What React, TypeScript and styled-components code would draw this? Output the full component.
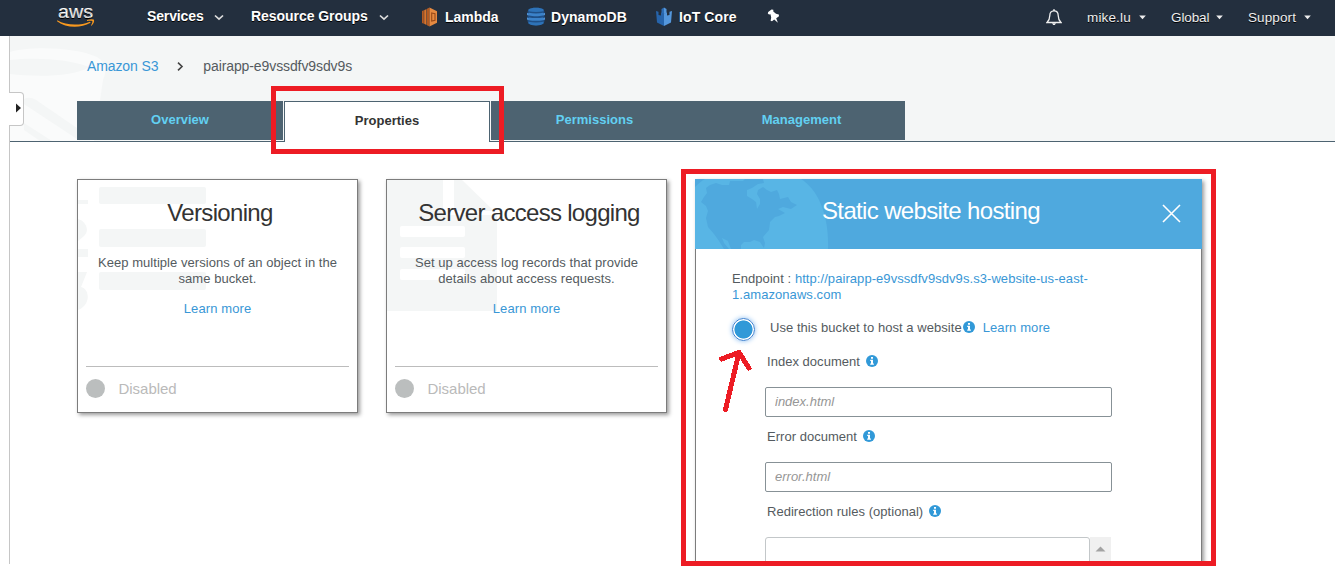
import React from "react";
import styled, { createGlobalStyle } from "styled-components";

const Global = createGlobalStyle`
  * { box-sizing: border-box; }
  html, body { margin: 0; background: #fff; overflow: hidden; }
  body { font-family: "Liberation Sans", Arial, sans-serif; font-size: 13px; color: #545b60; }
  a { color: #3997d6; text-decoration: none; }
`;

const Page = styled.div`
  width: 1335px;
  height: 567px;
  position: relative;
  overflow: hidden;
  display: flex;
  flex-direction: column;
`;

const NavBar = styled.header`
  height: 36px;
  flex: none;
  background: #232f3e;
  display: flex;
  align-items: center;
  padding: 0 24px 3px 57px;
  color: #fff;
  text-shadow: 0 1px 0 #000;
`;

const NavItem = styled.div<{ $ml: number; $ls?: number; $light?: boolean; $raised?: boolean }>`
  display: flex;
  align-items: center;
  height: 34px;
  padding-top: ${(p) => (p.$light ? 2 : 0)}px;
  padding-bottom: ${(p) => (p.$raised ? 1 : 0)}px;
  margin-left: ${(p) => p.$ml}px;
  font-weight: ${(p) => (p.$light ? 400 : 700)};
  font-size: ${(p) => (p.$light ? 13.5 : 14)}px;
  letter-spacing: ${(p) => p.$ls ?? 0}px;
  white-space: nowrap;
  color: ${(p) => (p.$light ? "#eee" : "#fff")};
  svg { display: block; flex: none; }
`;

const NavLabel = styled.span<{ $w: number }>`
  width: ${(p) => p.$w}px;
`;

const Spacer = styled.div`
  flex: 1;
`;

const Body = styled.div`
  width: 1326px;
  height: 528px;
  margin-left: 9px;
  border-left: 1px solid #c6c6c6;
  display: flex;
  flex-direction: column;
`;

const Hero = styled.div`
  height: 106px;
  flex: none;
  position: relative;
  background: #f4f6f6;
  border-bottom: 1px solid #4d6371;
  display: flex;
  flex-direction: column;
  padding-left: 67px;
`;

const BucketArt = styled.svg`
  position: absolute;
  left: 0;
  top: 0;
`;

const Crumbs = styled.nav`
  position: relative;
  height: 65px;
  flex: none;
  padding: 2px 0 7px 10px;
  display: flex;
  align-items: center;
  font-size: 14px;
  svg { margin: 0 19px 0 18px; }
`;

const CrumbLink = styled.a`
  letter-spacing: -0.12px;
`;
const CrumbText = styled.span`
  letter-spacing: -0.1px;
`;

const Tabs = styled.div`
  position: relative;
  display: flex;
  align-items: flex-start;
  height: 40px;
`;

const Tab = styled.div<{ $active?: boolean; $w: number }>`
  width: ${(p) => p.$w}px;
  height: ${(p) => (p.$active ? 41 : 39)}px;
  background: ${(p) => (p.$active ? "#fff" : "#4d6371")};
  border: ${(p) => (p.$active ? "1px solid #4d6371" : "0")};
  border-bottom: 0;
  margin: ${(p) => (p.$active ? "0 1px" : "0")};
  color: ${(p) => (p.$active ? "#333" : "#62d0f2")};
  font-weight: 700;
  font-size: 13px;
  line-height: 38px;
  text-align: center;
`;

const Drawer = styled.div`
  position: absolute;
  left: 9px;
  top: 92px;
  width: 15px;
  height: 34px;
  background: #fff;
  border: 1px solid #c6c6c6;
  border-left: 0;
  border-radius: 0 4px 4px 0;
  display: flex;
  align-items: center;
  justify-content: flex-end;
  padding: 0 2px 3px 0;
`;

const Cards = styled.main`
  flex: 1;
  min-height: 0;
  overflow: hidden;
  display: flex;
  align-items: flex-start;
  gap: 28px;
  padding: 37px 0 0 67px;
`;

const Card = styled.section`
  width: 281px;
  height: 234px;
  position: relative;
  background: #fff;
  border: 1px solid #7c7c7c;
  box-shadow: 2px 2px 4px rgba(0, 0, 0, 0.4);
  display: flex;
  flex-direction: column;
  align-items: center;
  padding: 0 8px;
`;

const CardArt = styled.svg`
  position: absolute;
  left: 0;
  top: 0;
`;

const Title = styled.h2<{ $ls: number }>`
  position: relative;
  margin: 19px 0 0 5px;
  font-weight: 400;
  font-size: 24px;
  line-height: 28px;
  letter-spacing: ${(p) => p.$ls}px;
  color: #333;
  white-space: nowrap;
`;

const Desc = styled.p`
  position: relative;
  margin: 28px 0 14px;
  line-height: 16px;
  text-align: center;
  letter-spacing: 0.05px;
  white-space: pre-line;
`;

const More = styled.a<{ $ml?: number }>`
  position: relative;
  letter-spacing: 0.1px;
  line-height: 16px;
  margin-left: ${(p) => p.$ml ?? 0}px;
`;

const Status = styled.div`
  margin-top: auto;
  width: 263px;
  height: 46px;
  border-top: 1px solid #bcbcbc;
  display: flex;
  align-items: center;
  gap: 13.5px;
  padding-bottom: 2px;
  font-size: 15px;
  letter-spacing: -0.03px;
  color: #bababa;
`;

const Dot = styled.span`
  width: 19px;
  height: 19px;
  border-radius: 50%;
  background: #bbbebe;
`;

const Panel = styled.section`
  width: 507px;
  height: 420px;
  background: #fff;
  border: 1px solid #7c7c7c;
  border-top: 0;
  box-shadow: 2px 2px 4px rgba(0, 0, 0, 0.4);
`;

const PanelHead = styled.div`
  position: relative;
  margin: 0 -1px;
  height: 70px;
  background: #4fa9de;
  display: flex;
  align-items: flex-start;
  padding-left: 127px;
`;

const PanelTitle = styled(Title)`
  color: #fff;
  margin: 18px 0 0 0;
  width: 340px;
`;

const Close = styled.svg`
  margin-top: 25px;
`;

const PanelBody = styled.div`
  padding: 22px 0 0 36px;
`;

const Endpoint = styled.p`
  margin: 0;
  line-height: 16px;
  letter-spacing: 0.065px;
`;

const Option = styled.div`
  display: flex;
  align-items: center;
  height: 28px;
  margin-top: 10px;
  line-height: 18px;
  letter-spacing: 0.05px;
  ${More} { line-height: 18px; }
`;

const Radio = styled.span`
  width: 23px;
  height: 23px;
  margin: 4px 15px 0 0;
  border-radius: 50%;
  border: 1px solid #3a7fd0;
  box-shadow: 0 0 5px #8abdf0;
  background: radial-gradient(circle, #3199d8 8.7px, #fff 9.4px);
  flex: none;
`;

const OptionText = styled.span`
  margin-right: 1px;
  padding-top: 2px;
  & ~ ${More} { padding-top: 2px; }
`;

const Field = styled.div`
  margin: 1px 0 0 33px;
  display: flex;
  flex-direction: column;
`;

const FieldLabel = styled.label`
  display: flex;
  align-items: center;
  gap: 6px;
  height: 16px;
  margin: 11px 0 18px 2px;
  letter-spacing: 0.03px;
`;

const Input = styled.input`
  width: 347px;
  height: 30px;
  border: 1px solid #879196;
  border-radius: 2px;
  padding: 0 9px 1px;
  font: italic 13px "Liberation Sans", Arial, sans-serif;
  margin: 0;
  background: #fff;
  &::placeholder { color: #969696; opacity: 1; }
`;

const RulesRow = styled.div`
  display: flex;
  height: 40px;
`;

const Rules = styled.div`
  width: 325px;
  border: 1px solid #c3c7c9;
  border-radius: 3px 3px 0 0;
`;

const Scroll = styled.div`
  width: 21px;
  background: #f0f0f0;
  padding: 9px 0 0 5px;
  svg { display: block; }
`;

const Highlight = styled.div<{ $x: number; $y: number; $w: number; $h: number }>`
  position: absolute;
  left: ${(p) => p.$x}px;
  top: ${(p) => p.$y}px;
  width: ${(p) => p.$w}px;
  height: ${(p) => p.$h}px;
  border: 5px solid #ed1c24;
`;

const Arrow = styled.svg`
  position: absolute;
  left: 712px;
  top: 342px;
`;

const Chevron = () => (
  <svg width="10" height="9" viewBox="0 0 10 9">
    <path d="M1 3.500 L5 7.200 L9 3.500" fill="none" stroke="#ddd" strokeWidth="1.700" />
  </svg>
);

const Caret = () => (
  <svg width="7" height="5" viewBox="0 0 7 5">
    <path d="M0.2 0.5 H6.8 L3.5 4.2 Z" fill="#eee" />
  </svg>
);

const InfoSvg = styled.svg`
  flex: none;
`;

const Info = () => (
  <InfoSvg width="12" height="12" viewBox="0 0 12 12">
    <circle cx="6" cy="6" r="6" fill="#3199d8" />
    <path d="M5 2h2v1.800H5z M4.200 4.800H7v3.600h.9v1.300H4.200V8.400H5V6h-.8z" fill="#fff" />
  </InfoSvg>
);

const AwsLogo = () => (
  <svg width="38" height="33" viewBox="57 0 38 33">
    <text x="58" y="17.500" fontSize="19" fontFamily="Liberation Sans, sans-serif" fill="#fff" stroke="#fff" strokeWidth="0.2" textLength="35" lengthAdjust="spacingAndGlyphs">aws</text>
    <path d="M57.300 20.300 C66 25.500 80 26 90 21.700 L90.600 22.800 C80 28.500 66 28 57 21.200 Z" fill="#f7981f" />
    <path d="M87 20 C90 18.900 93 19 94 19.800 C94.500 21.500 93.500 24 91.500 25.800 L91 25.400 C92 23.700 92.800 21.800 92.300 21 C91.300 20.500 89 20.700 87 20.900 Z" fill="#f7981f" />
  </svg>
);

const LambdaIcon = () => (
  <svg width="15" height="20" viewBox="0 0 15 20">
    <path d="M0 4 L1.800 3.200 V16.800 L0 16 Z M5 1.800 L7.500 .6 V19.400 L5 18.200 Z" fill="#b35a22" />
    <path d="M2.200 3.200 L4.500 2 V18 L2.200 16.800 Z" fill="#d9742b" />
    <path d="M7.500 .6 L15 4.300 V15.700 L7.500 19.400 Z" fill="#e58a41" />
    <path d="M9.700 6 L13 6.800 V13.200 L9.700 14 Z" fill="none" stroke="#9a4a18" strokeWidth="1.100" />
  </svg>
);

const DynamoIcon = () => (
  <svg width="18" height="19" viewBox="0 0 18 19">
    <path d="M1.500 2.500 C4 0 14 0 16.500 2.500 L17.500 5 V14 L16.500 16.500 C14 19 4 19 1.500 16.500 L.5 14 V5Z" fill="#1f4f86" />
    <path d="M1.500 2.500 C4 0 14 0 16.500 2.500 V4.300 C12 5.300 6 5.300 1.500 4.300Z" fill="#2e73b8" />
    <path d="M2 5.800 C6 6.600 12 6.600 16 5.800 V8.600 C12 9.500 6 9.500 2 8.600Z M2 10.400 C6 11.200 12 11.200 16 10.400 V13.200 C12 14 6 14 2 13.200Z" fill="#3b82c9" />
    <path d="M1.500 14.700 C6 15.800 12 15.800 16.500 14.700 V16.500 C14 19 4 19 1.500 16.500Z" fill="#2e73b8" />
    <path d="M0 6 L1.800 6.300 V8.600 L0 8Z M0 10.600 L1.800 11 V13.200 L0 12.600Z M18 6 L16.200 6.300 V8.600 L18 8Z M18 10.600 L16.200 11 V13.200 L18 12.600Z" fill="#4f93d6" />
  </svg>
);

const IotIcon = () => (
  <svg width="16" height="19" viewBox="0 0 16 19">
    <path d="M0 4 L2.500 4.800 V8 L5 8.500 V5.500 L8 6.500 V19 L1 15.500Z" fill="#2664ab" />
    <path d="M16 4 L13.500 4.800 V8 L11 8.500 V5.500 L8 6.500 V19 L15 15.500Z" fill="#5497dc" />
    <path d="M5.500 2 L8 .6 V7 L5.500 6Z" fill="#2d6db5" />
    <path d="M8 .6 L10.500 2 V6 L8 7Z" fill="#5497dc" />
  </svg>
);

const PinIcon = () => (
  <svg width="13" height="15" viewBox="0 0 13 15">
    <path d="M.8 4.500 L1.200 3 L4.500 .6 L6.300 .7 L6.300 2.500 L9 4.800 L11.800 5.600 L12 7.300 L9.200 9.300 L10.900 13.800 L7.200 10.500 L5 12.200 L3.600 11.800 L4.200 8.600 L3.500 5.200 L2 5.500 Z" fill="#fff" />
  </svg>
);

const BellIcon = () => (
  <svg width="16" height="17" viewBox="0 0 16 17">
    <path d="M8 1.800 C5 1.800 3.800 3.800 3.800 6.500 C3.800 10.500 2.500 12 1 13.500 H15 C13.500 12 12.200 10.500 12.200 6.500 C12.200 3.800 11 1.800 8 1.800Z" fill="none" stroke="#eee" strokeWidth="1.300" />
    <path d="M7.200 .3 H8.800 V2 H7.200Z M6 14.300 H10 L8.800 16 H7.200Z" fill="#eee" />
  </svg>
);

export default function App() {
  return (
    <Page>
      <Global />
      <NavBar>
        <AwsLogo />
        <NavItem $ml={52} $ls={-0.13} $raised><NavLabel $w={67}>Services</NavLabel><Chevron /></NavItem>
        <NavItem $ml={27} $ls={-0.05} $raised><NavLabel $w={128}>Resource Groups</NavLabel><Chevron /></NavItem>
        <NavItem $ml={33}><LambdaIcon /></NavItem>
        <NavItem $ml={8} $ls={-0.05}><NavLabel $w={82}>Lambda</NavLabel></NavItem>
        <NavItem $ml={0}><DynamoIcon /></NavItem>
        <NavItem $ml={6} $ls={0.05}><NavLabel $w={105}>DynamoDB</NavLabel></NavItem>
        <NavItem $ml={0}><IotIcon /></NavItem>
        <NavItem $ml={7} $ls={0.1}><NavLabel $w={88}>IoT Core</NavLabel></NavItem>
        <NavItem $ml={0}><PinIcon /></NavItem>
        <Spacer />
        <NavItem $ml={0} $light><BellIcon /></NavItem>
        <NavItem $ml={25} $light $ls={0.15}><NavLabel $w={52}>mike.lu</NavLabel><Caret /></NavItem>
        <NavItem $ml={25} $light $ls={-0.1}><NavLabel $w={45}>Global</NavLabel><Caret /></NavItem>
        <NavItem $ml={25} $light $ls={0.1}><NavLabel $w={56}>Support</NavLabel><Caret /></NavItem>
      </NavBar>
      <Body>
        <Hero>
          <BucketArt width="110" height="105" viewBox="10 36 110 105">
            <path d="M10 52 C30 46 75 47 97 57 C106 62 107 72 103 80 L94 141 H10Z" fill="#fafbfb" />
            <path d="M10 60 C35 57 70 59 89 67 C75 77 35 77 10 74Z" fill="#f4f6f6" />
            <path d="M24 99 Q30 96 36 100 L90 137 V141 H80 L24 104Z" fill="#f4f6f6" />
            <path d="M24 123 L52 141 H40 L24 130Z" fill="#f4f6f6" />
          </BucketArt>
          <Crumbs>
            <CrumbLink>Amazon S3</CrumbLink>
            <svg width="8" height="9" viewBox="0 0 8 9"><path d="M2 .7 L6 4.500 L2 8.300" fill="none" stroke="#444" strokeWidth="1.600" /></svg>
            <CrumbText>pairapp-e9vssdfv9sdv9s</CrumbText>
          </Crumbs>
          <Tabs>
            <Tab $w={206}>Overview</Tab>
            <Tab $w={206} $active>Properties</Tab>
            <Tab $w={207}>Permissions</Tab>
            <Tab $w={207}>Management</Tab>
          </Tabs>
        </Hero>
        <Cards>
          <Card>
            <CardArt width="130" height="130" viewBox="78 180 130 130">
              <g fill="#f4f6f6">
                <rect x="99" y="187" width="107" height="17" rx="2" />
                <rect x="99" y="229" width="107" height="18" rx="2" />
                <rect x="99" y="272" width="107" height="18" rx="2" />
                <rect x="78" y="200" width="10" height="4" />
                <path d="M78 219 C86 221 90 231 84 236 L78 241Z M78 249 H88 V257 H78Z M78 272 H87 L81 287 C90 289 91 305 78 310Z" />
              </g>
            </CardArt>
            <Title $ls={-0.68}>Versioning</Title>
            <Desc>{"Keep multiple versions of an object in the\nsame bucket."}</Desc>
            <More>Learn more</More>
            <Status><Dot />Disabled</Status>
          </Card>
          <Card>
            <CardArt width="130" height="132" viewBox="387 180 130 132">
              <path d="M387 180 H443 V215 H497 V311 H387Z M454 180 H462 L494 211 H454Z" fill="#f4f6f6" />
              <g fill="#fff">
                <rect x="400" y="226" width="65" height="11" rx="2" />
                <rect x="400" y="247" width="65" height="11" rx="2" />
                <rect x="400" y="269" width="65" height="11" rx="2" />
              </g>
            </CardArt>
            <Title $ls={-0.7}>Server access logging</Title>
            <Desc>{"Set up access log records that provide\ndetails about access requests."}</Desc>
            <More>Learn more</More>
            <Status><Dot />Disabled</Status>
          </Card>
          <Panel>
            <PanelHead>
              <CardArt width="140" height="70" viewBox="695 179 140 70">
                <path d="M695 187 Q701 181 705 179 H801 C818 190 829 214 828 249 H695Z" fill="#58b5e5" />
                <path d="M701 202 L704 197 L707 193 L706 188 L710 185 L716 183 L722 185 L729 185 L730 181 L743 181 L745 179 L763 179 L764 183 L758 184 L752 188 L747 190 L747 196 L752 199 L756 202 L757 209 L760 204 L760 199 L757 194 L758 190 L763 187 L767 190 L771 192 L777 190 L779 194 L780 199 L788 197 L791 202 L797 205 L791 209 L783 207 L778 209 L785 213 L779 216 L775 217 L770 222 L769 230 L763 237 L765 243 L764 248 L760 242 L754 240 L750 242 L744 242 L741 245 V249 H731 L728 241 L722 238 L724 243 L729 249 H724 L719 241 L714 234 L708 227 L706 218 L708 211 L706 206Z" fill="#4fa9de" />
              </CardArt>
              <PanelTitle $ls={-0.65}>Static website hosting</PanelTitle>
              <Close width="19" height="19" viewBox="0 0 19 19"><path d="M1 1 L18 18 M18 1 L1 18" stroke="#fff" strokeWidth="1.600" /></Close>
            </PanelHead>
            <PanelBody>
              <Endpoint>Endpoint : <a>http://pairapp-e9vssdfv9sdv9s.s3-website-us-east-<br />1.amazonaws.com</a></Endpoint>
              <Option><Radio /><OptionText>Use this bucket to host a website</OptionText><Info /><More $ml={8}>Learn more</More></Option>
              <Field>
                <FieldLabel>Index document <Info /></FieldLabel>
                <Input placeholder="index.html" />
                <FieldLabel>Error document <Info /></FieldLabel>
                <Input placeholder="error.html" />
                <FieldLabel>Redirection rules (optional) <Info /></FieldLabel>
                <RulesRow>
                  <Rules />
                  <Scroll><svg width="11" height="6" viewBox="0 0 11 6"><path d="M0.500 5.500 L5.500 .5 L10.500 5.500Z" fill="#a3a3a3" /></svg></Scroll>
                </RulesRow>
              </Field>
            </PanelBody>
          </Panel>
        </Cards>
      </Body>
      <Drawer><svg width="5" height="10" viewBox="0 0 5 10"><path d="M0 .5 L5 5 L0 9.500Z" fill="#222" /></svg></Drawer>
      <Highlight $x={271} $y={86} $w={233} $h={68} />
      <Highlight $x={681} $y={169} $w={535} $h={397} />
      <Arrow width="45" height="75" viewBox="712 342 45 75"><path d="M725.500 409.500 L739 352.500 M721.500 359 L739 352.500 L749 368" fill="none" stroke="#ed1c24" strokeWidth="5" strokeLinecap="round" strokeLinejoin="round" shapeRendering="crispEdges" /></Arrow>
    </Page>
  );
}
